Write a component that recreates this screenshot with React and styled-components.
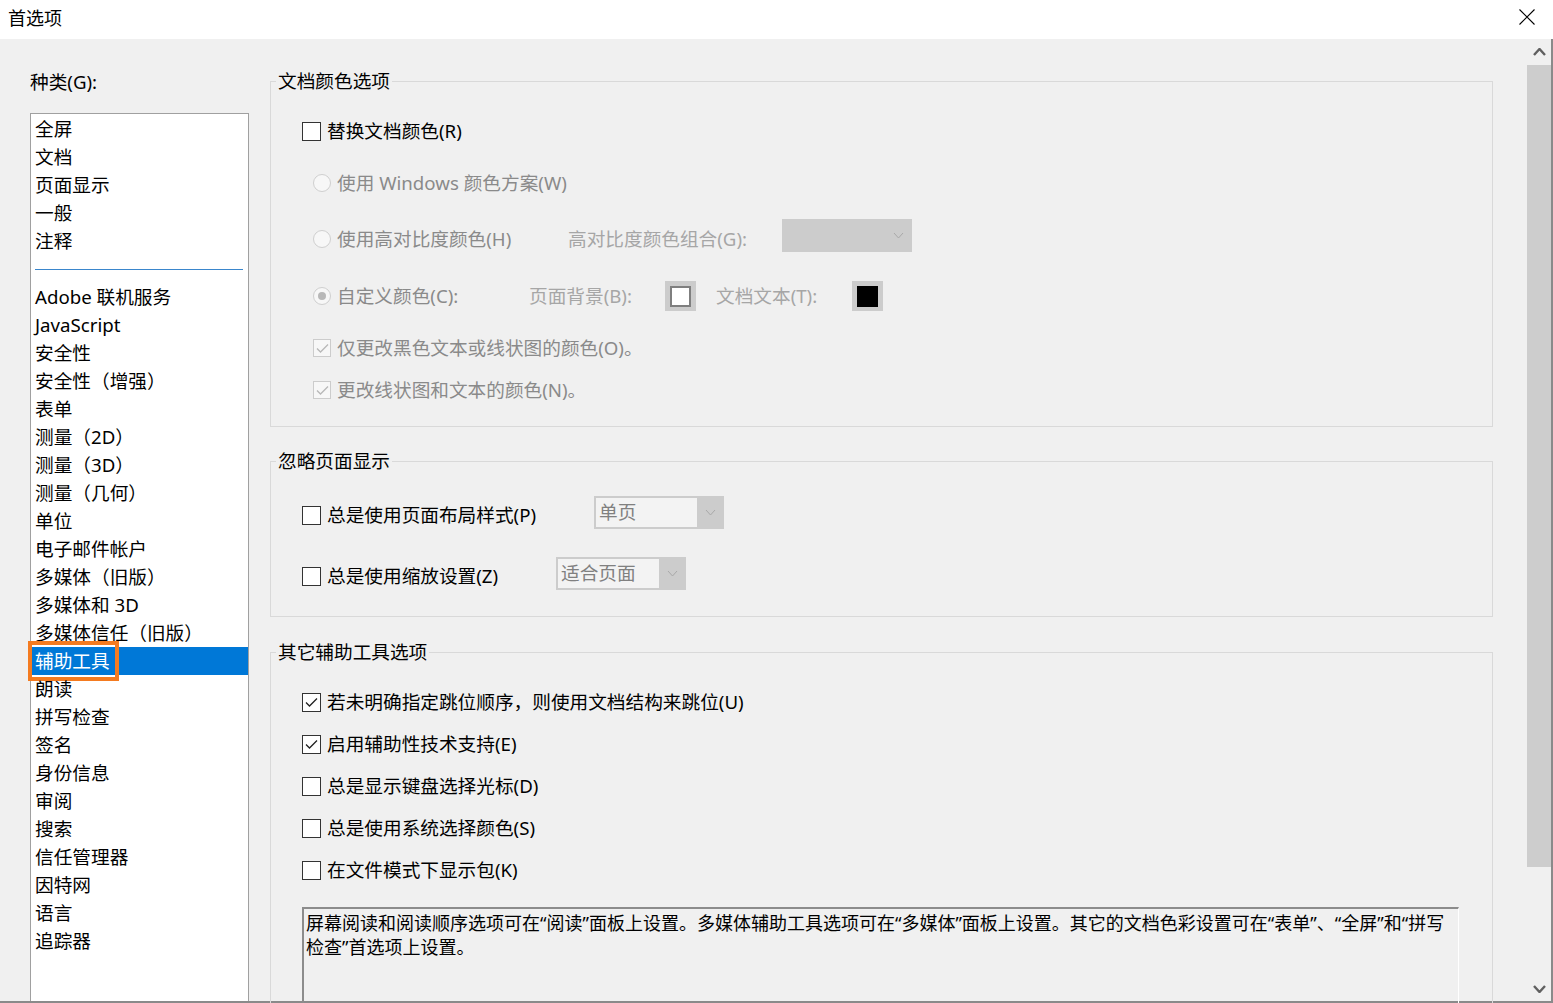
import React from "react";
import styled, { createGlobalStyle } from "styled-components";

const GlobalStyle = createGlobalStyle`
  html, body {
    margin: 0;
    padding: 0;
    background: #f0f0f0;
  }
  body {
    font-family: "Noto Sans", "Noto Sans CJK SC", sans-serif;
    color: #000;
  }
`;

const Window = styled.div`
  width: 1553px;
  height: 1003px;
  display: flex;
  flex-direction: column;
  overflow: hidden;
  background: #f0f0f0;
`;

const TitleBar = styled.div`
  height: 39px;
  flex: none;
  background: #fff;
  display: flex;
  align-items: center;
  justify-content: space-between;
  padding: 0 18px 5px 8px;
  box-sizing: border-box;
  font-size: 18px;
`;

const CloseButton = styled.span`
  display: flex;
  width: 16px;
  height: 16px;
`;

const Body = styled.div`
  flex: 1;
  display: flex;
  min-height: 0;
  border-right: 2px solid #8a8a8a;
  border-bottom: 2px solid #8a8a8a;
`;

const LeftPane = styled.div`
  width: 270px;
  flex: none;
  box-sizing: border-box;
  padding: 31px 0 0 30px;
  display: flex;
  flex-direction: column;
`;

const CategoryLabel = styled.div`
  font-size: 18.67px;
  line-height: 24px;
  height: 24px;
`;

const ListBox = styled.div`
  margin-top: 19px;
  width: 219px;
  flex: 1;
  box-sizing: border-box;
  background: #fff;
  border: 1px solid #a0a0a0;
  border-bottom: none;
  padding-top: 1px;
`;

const ListItem = styled.div`
  position: relative;
  height: 28px;
  line-height: 28px;
  padding-left: 4px;
  font-size: 18.67px;
  white-space: nowrap;
  background: ${(p) => (p.$selected ? "#0078d7" : "transparent")};
  color: ${(p) => (p.$selected ? "#fff" : "#000")};
`;

const Highlight = styled.span`
  position: absolute;
  left: -3px;
  top: -6px;
  width: 91px;
  height: 40px;
  box-sizing: border-box;
  border: 4px solid #f47b20;
  pointer-events: none;
`;

const SeparatorItem = styled.div`
  height: 28px;
  display: flex;
  align-items: center;
  padding-left: 4px;
`;

const SeparatorLine = styled.div`
  width: 208px;
  height: 1px;
  background: #3a86cc;
`;

const RightPane = styled.div`
  width: 1223px;
  flex: none;
  padding-top: 30px;
  margin-right: auto;
`;

const Group = styled.fieldset`
  margin: ${(p) => p.$mt || 0}px 0 0;
  padding: 0 0 ${(p) => p.$pb || 0}px 5px;
  border: 1px solid #d9d9d9;
  width: 100%;
  box-sizing: border-box;
  min-width: 0;
`;

const Legend = styled.legend`
  padding: 0 2px;
  font-size: 18.67px;
  line-height: 24px;
`;

const GroupBody = styled.div`
  padding-left: 26px;
`;

const Row = styled.div`
  display: flex;
  align-items: center;
  height: 34px;
  margin-top: ${(p) => p.$mt || 0}px;
  padding-left: ${(p) => p.$indent || 0}px;
`;

const Label = styled.span`
  display: inline-block;
  flex: none;
  width: ${(p) => (p.$w ? `${p.$w}px` : "auto")};
  margin-left: ${(p) => p.$ml ?? 0}px;
  font-size: 18.67px;
  line-height: 24px;
  white-space: nowrap;
  color: ${(p) => (p.$tone === "muted" ? "#8a8a8a" : p.$tone === "faint" ? "#a6a6a6" : "#000")};
`;

const CheckBox = styled.span`
  flex: none;
  width: ${(p) => (p.$disabled ? 18 : 19)}px;
  height: ${(p) => (p.$disabled ? 18 : 19)}px;
  box-sizing: border-box;
  border: 1px solid ${(p) => (p.$disabled ? "#cccccc" : "#333333")};
  background: ${(p) => (p.$disabled ? "#f7f7f7" : "#fff")};
  display: flex;
  align-items: center;
  justify-content: center;
`;

const Radio = styled.span`
  flex: none;
  width: 18px;
  height: 18px;
  box-sizing: border-box;
  border-radius: 50%;
  border: 1px solid #cfcfcf;
  background: #f7f7f7;
  display: flex;
  align-items: center;
  justify-content: center;
  &::after {
    content: "";
    display: ${(p) => (p.$checked ? "block" : "none")};
    width: 8px;
    height: 8px;
    border-radius: 50%;
    background: #b8b8b8;
  }
`;

const Select = styled.div`
  flex: none;
  width: 130px;
  height: 33px;
  box-sizing: border-box;
  padding: 2px 0 2px 2px;
  margin-bottom: ${(p) => (p.$lift ? p.$lift : 0)}px;
  background: #cccccc;
  display: flex;
`;

const SelectField = styled.div`
  flex: 1;
  background: ${(p) => (p.$empty ? "transparent" : "#f3f3f3")};
  color: #808080;
  font-size: 18.67px;
  line-height: 28px;
  padding-left: 3px;
  white-space: nowrap;
`;

const SelectArrow = styled.div`
  width: 27px;
  flex: none;
  display: flex;
  align-items: center;
  justify-content: center;
`;

const Swatch = styled.span`
  flex: none;
  width: 31px;
  height: 30px;
  background: #cccccc;
  display: flex;
  align-items: center;
  justify-content: center;
  margin-right: ${(p) => p.$mr || 0}px;
`;

const SwatchColor = styled.span`
  width: 21px;
  height: 21px;
  box-sizing: border-box;
  background: ${(p) => p.$color};
  border: 2px solid ${(p) => (p.$color === "#fff" ? "#7f7f7f" : p.$color)};
`;

const NoteBox = styled.div`
  margin-top: 20px;
  width: 1157px;
  height: 130px;
  box-sizing: border-box;
  border-top: 2px solid #8c8c8c;
  border-left: 2px solid #8c8c8c;
  border-right: 1px solid #fff;
  border-bottom: 1px solid #fff;
  padding: 2px 4px 0 2px;
  font-size: 18px;
  line-height: 24px;
`;

const ScrollBar = styled.div`
  width: 24px;
  flex: none;
  display: flex;
  flex-direction: column;
  background: #f0f0f0;
`;

const ScrollArrow = styled.div`
  height: ${(p) => p.$h}px;
  flex: none;
  display: flex;
  align-items: center;
  justify-content: center;
`;

const ScrollThumb = styled.div`
  height: 802px;
  flex: none;
  background: #cdcdcd;
`;

const ScrollSpacer = styled.div`
  flex: 1;
`;

const categories = [
  "全屏", "文档", "页面显示", "一般", "注释", null,
  "Adobe 联机服务", "JavaScript", "安全性", "安全性（增强）", "表单",
  "测量（2D）", "测量（3D）", "测量（几何）", "单位", "电子邮件帐户",
  "多媒体（旧版）", "多媒体和 3D", "多媒体信任（旧版）", "辅助工具", "朗读",
  "拼写检查", "签名", "身份信息", "审阅", "搜索", "信任管理器", "因特网",
  "语言", "追踪器",
];

const Check = ({ color }) => (
  <svg width="13" height="11" viewBox="0 0 13 11">
    <polyline points="1,5.5 4.5,9 12,1.5" fill="none" stroke={color} strokeWidth="1.3" />
  </svg>
);

const Chevron = ({ up, color, w = 11, h = 7, sw = 1 }) => (
  <svg width={w} height={h} viewBox={`0 0 ${w} ${h}`}>
    <polyline
      points={up ? `1,${h - 1} ${w / 2},1 ${w - 1},${h - 1}` : `1,1 ${w / 2},${h - 1} ${w - 1},1`}
      fill="none"
      stroke={color}
      strokeWidth={sw}
    />
  </svg>
);

const CheckRow = ({ label, checked, disabled, mt, indent, w, children }) => (
  <Row $mt={mt} $indent={indent}>
    <CheckBox $disabled={disabled}>
      {checked && <Check color={disabled ? "#b8b8b8" : "#222"} />}
    </CheckBox>
    <Label $ml={6} $w={w} $tone={disabled ? "muted" : undefined}>{label}</Label>
    {children}
  </Row>
);

const RadioRow = ({ label, checked, mt, w, children }) => (
  <Row $mt={mt} $indent={11}>
    <Radio $checked={checked} />
    <Label $ml={6} $w={w} $tone="muted">{label}</Label>
    {children}
  </Row>
);

const Dropdown = ({ value, lift }) => (
  <Select $lift={lift}>
    <SelectField $empty={!value}>{value}</SelectField>
    <SelectArrow>
      <Chevron color="#a9a9a9" />
    </SelectArrow>
  </Select>
);

export default function App() {
  return (
    <>
      <GlobalStyle />
      <Window>
        <TitleBar>
          <span>首选项</span>
          <CloseButton>
            <svg width="16" height="16" viewBox="0 0 16 16">
              <path d="M0.5 0.5 L15.5 15.5 M15.5 0.5 L0.5 15.5" stroke="#000" strokeWidth="1.1" />
            </svg>
          </CloseButton>
        </TitleBar>
        <Body>
          <LeftPane>
            <CategoryLabel>种类(G):</CategoryLabel>
            <ListBox>
              {categories.map((name, i) =>
                name === null ? (
                  <SeparatorItem key={i}>
                    <SeparatorLine />
                  </SeparatorItem>
                ) : (
                  <ListItem key={i} $selected={name === "辅助工具"}>
                    {name}
                    {name === "辅助工具" && <Highlight />}
                  </ListItem>
                )
              )}
            </ListBox>
          </LeftPane>

          <RightPane>
            <Group $pb={19}>
              <Legend>文档颜色选项</Legend>
              <GroupBody>
                <CheckRow mt={21} label="替换文档颜色(R)" />
                <RadioRow mt={18} label="使用 Windows 颜色方案(W)" />
                <RadioRow mt={22} w={231} label="使用高对比度颜色(H)">
                  <Label $w={214} $tone="faint">高对比度颜色组合(G):</Label>
                  <Dropdown lift={7} />
                </RadioRow>
                <RadioRow mt={23} w={192} checked label="自定义颜色(C):">
                  <Label $w={136} $tone="faint">页面背景(B):</Label>
                  <Swatch $mr={20}>
                    <SwatchColor $color="#fff" />
                  </Swatch>
                  <Label $w={136} $tone="faint">文档文本(T):</Label>
                  <Swatch>
                    <SwatchColor $color="#000" />
                  </Swatch>
                </RadioRow>
                <CheckRow mt={18} indent={11} checked disabled label="仅更改黑色文本或线状图的颜色(O)。" />
                <CheckRow mt={8} indent={11} checked disabled label="更改线状图和文本的颜色(N)。" />
              </GroupBody>
            </Group>

            <Group $mt={22} $pb={23}>
              <Legend>忽略页面显示</Legend>
              <GroupBody>
                <CheckRow mt={25} w={267} label="总是使用页面布局样式(P)">
                  <Dropdown value="单页" lift={6} />
                </CheckRow>
                <CheckRow mt={27} w={229} label="总是使用缩放设置(Z)">
                  <Dropdown value="适合页面" lift={6} />
                </CheckRow>
              </GroupBody>
            </Group>

            <Group $mt={23} $pb={40}>
              <Legend>其它辅助工具选项</Legend>
              <GroupBody>
                <CheckRow mt={21} checked label="若未明确指定跳位顺序，则使用文档结构来跳位(U)" />
                <CheckRow mt={8} checked label="启用辅助性技术支持(E)" />
                <CheckRow mt={8} label="总是显示键盘选择光标(D)" />
                <CheckRow mt={8} label="总是使用系统选择颜色(S)" />
                <CheckRow mt={8} label="在文件模式下显示包(K)" />
                <NoteBox>
                  屏幕阅读和阅读顺序选项可在“阅读”面板上设置。多媒体辅助工具选项可在“多媒体”面板上设置。其它的文档色彩设置可在“表单”、“全屏”和“拼写
                  <br />
                  检查”首选项上设置。
                </NoteBox>
              </GroupBody>
            </Group>
          </RightPane>

          <ScrollBar>
            <ScrollArrow $h={26}>
              <Chevron up color="#606060" w={13} h={8} sw={2.4} />
            </ScrollArrow>
            <ScrollThumb />
            <ScrollSpacer />
            <ScrollArrow $h={24}>
              <Chevron color="#606060" w={13} h={8} sw={2.4} />
            </ScrollArrow>
          </ScrollBar>
        </Body>
      </Window>
    </>
  );
}
